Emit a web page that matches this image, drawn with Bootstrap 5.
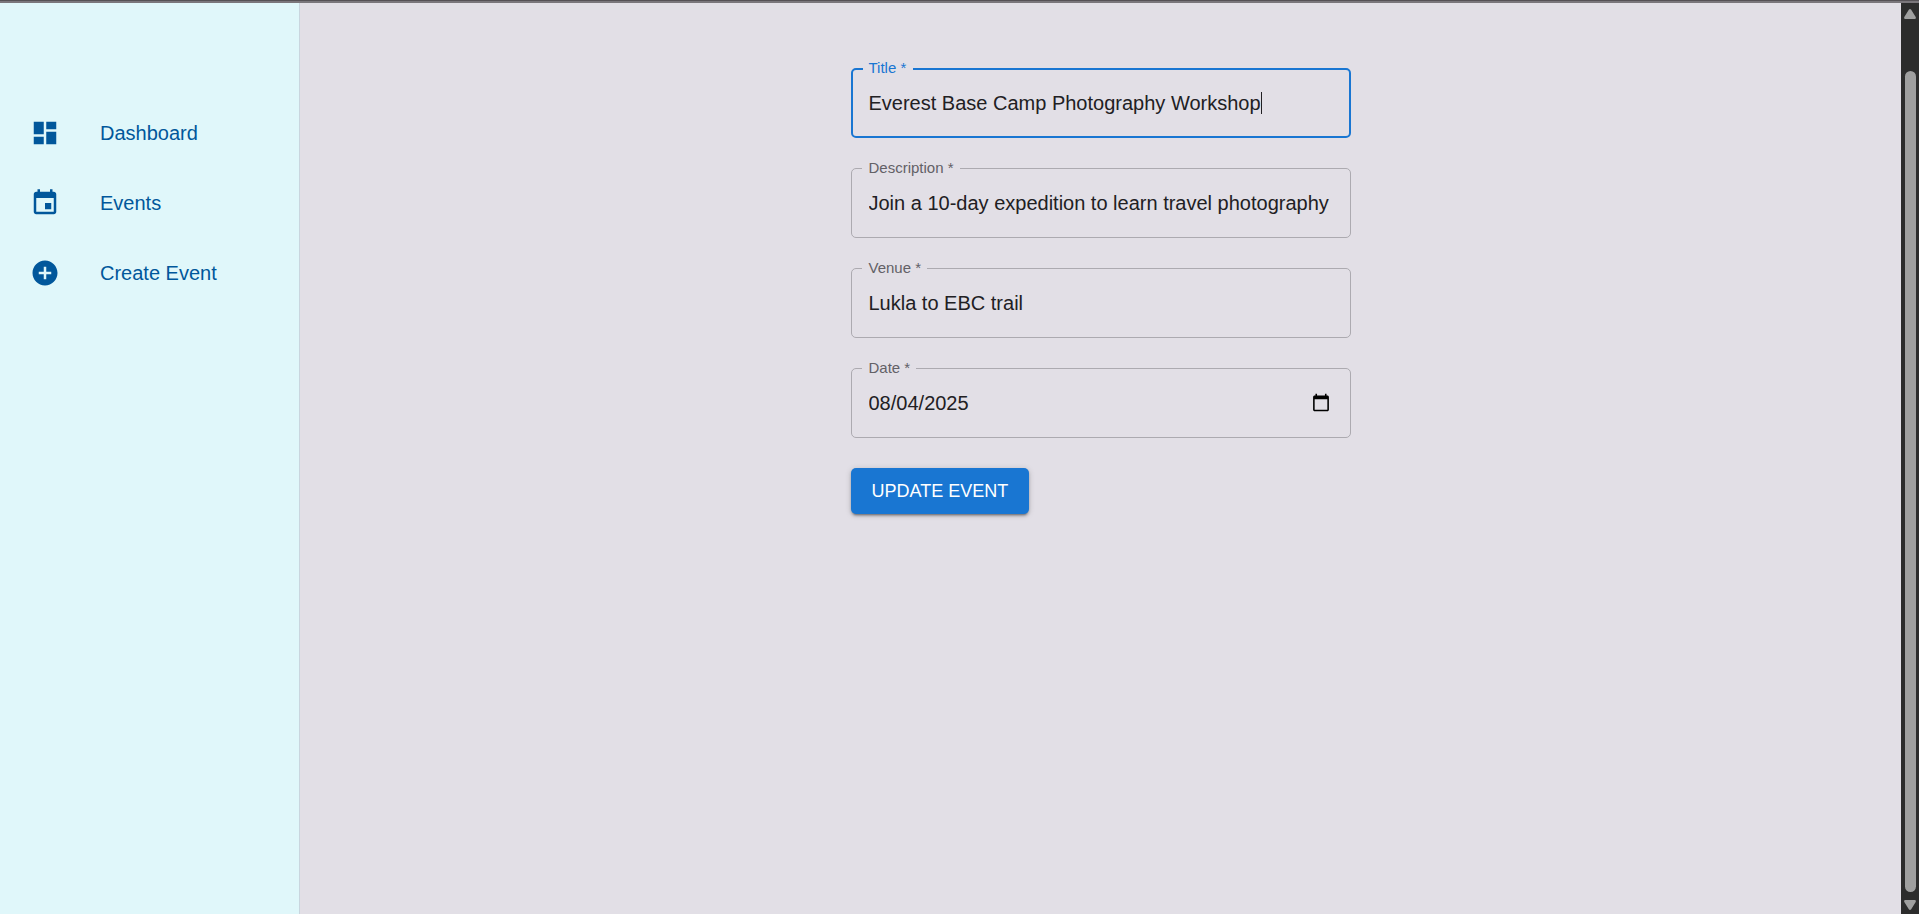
<!DOCTYPE html>
<html lang="en">
<head>
<meta charset="utf-8">
<meta name="viewport" content="width=device-width, initial-scale=1">
<title>Update Event</title>
<link href="https://cdn.jsdelivr.net/npm/bootstrap@5.3.0/dist/css/bootstrap.min.css" rel="stylesheet">
<style>
  :root { --page: #e2dfe6; --brand: #1976d2; --navy: #01579b; }
  body { font-family: "Liberation Sans", Arial, sans-serif; font-size: 20px; line-height: 30px; background: var(--page); }
  .top-edge { height: 3px; background: #7a767b; border-top: 1px solid #555155; }
  .sidebar { width: 300px; background: #e0f7fa; border-right: 1px solid #c9d5de; padding-top: 95px; }
  .sidebar .nav-link { color: var(--navy); gap: 40px; padding: 20px 30px; }
  .sidebar svg { width: 30px; height: 30px; fill: currentColor; flex: none; }
  .event-form { width: 100%; max-width: 500px; padding-top: 65px; }
  .field { margin-bottom: 30px; }
  .field .form-control { height: 70px; padding: 0 17px; font-size: 20px; color: #212023; background: transparent; border: 1px solid #acaab0; border-radius: 5px; box-shadow: none; }
  .field label { top: -10px; left: 11px; padding: 0 6px 0 7px; font-size: 15px; line-height: 20px; color: #636166; background: var(--page); }
  .field.active .form-control { border: 2px solid var(--brand); padding: 0 16px; }
  .field.active label { color: var(--brand); left: 12px; padding: 0 7px 0 6px; }
  .text-caret { left: 410px; top: 24px; width: 1px; height: 22px; background: #212023; }
  .btn-update { font-size: 18px; line-height: 26px; padding: 10px 21px; color: #fff; background: var(--brand); border: 0; border-radius: 5px; box-shadow: 0 3px 2px -2px rgba(0,0,0,.3), 0 2px 3px rgba(0,0,0,.2), 0 1px 6px rgba(0,0,0,.16); }
  .btn-update:hover { color: #fff; background: #1565c0; }
  .scroll-track { width: 18px; background: #2c2c2c; padding: 6px 0 4px; }
  .scroll-track svg { width: 12px; height: 10px; fill: #9f9f9f; }
  .scroll-thumb { width: 11px; margin: 52px 0 8px; border-radius: 6px; background: #9f9f9f; }
</style>
</head>
<body>
<div class="d-flex flex-column min-vh-100">
  <div class="top-edge"></div>
  <div class="d-flex flex-grow-1">
    <nav class="sidebar flex-shrink-0">
      <ul class="nav flex-column">
        <li class="nav-item"><a class="nav-link d-flex align-items-center" href="#">
          <svg viewBox="0 0 24 24" aria-hidden="true"><path d="M3 13h8V3H3v10zm0 8h8v-6H3v6zm10 0h8V11h-8v10zm0-18v6h8V3h-8z"/></svg>Dashboard</a></li>
        <li class="nav-item"><a class="nav-link d-flex align-items-center" href="#">
          <svg viewBox="0 0 24 24" aria-hidden="true"><path d="M17 12h-5v5h5v-5zM16 1v2H8V1H6v2H5c-1.11 0-1.99.9-1.99 2L3 19c0 1.1.89 2 2 2h14c1.1 0 2-.9 2-2V5c0-1.1-.9-2-2-2h-1V1h-2zm3 18H5V8h14v11z"/></svg>Events</a></li>
        <li class="nav-item"><a class="nav-link d-flex align-items-center" href="#">
          <svg viewBox="0 0 24 24" aria-hidden="true"><path d="M12 2C6.48 2 2 6.48 2 12s4.48 10 10 10 10-4.48 10-10S17.52 2 12 2zm5 11h-4v4h-2v-4H7v-2h4V7h2v4h4v2z"/></svg>Create Event</a></li>
      </ul>
    </nav>
    <main class="flex-grow-1 d-flex justify-content-center">
      <form class="event-form">
        <div class="field active position-relative">
          <input class="form-control" id="title" type="text" value="Everest Base Camp Photography Workshop" required>
          <label class="position-absolute" for="title">Title *</label>
          <span class="text-caret position-absolute" aria-hidden="true"></span>
        </div>
        <div class="field position-relative">
          <input class="form-control" id="description" type="text" value="Join a 10-day expedition to learn travel photography" required>
          <label class="position-absolute" for="description">Description *</label>
        </div>
        <div class="field position-relative">
          <input class="form-control" id="venue" type="text" value="Lukla to EBC trail" required>
          <label class="position-absolute" for="venue">Venue *</label>
        </div>
        <div class="field position-relative">
          <input class="form-control" id="date" type="date" value="2025-08-04" required>
          <label class="position-absolute" for="date">Date *</label>
        </div>
        <button class="btn btn-update" type="submit">UPDATE EVENT</button>
      </form>
    </main>
    <div class="scroll-track d-flex flex-column align-items-center flex-shrink-0" aria-hidden="true">
      <svg viewBox="0 0 12 10"><path d="M6 0q.7 0 1.2.8l4.5 7.2q.6 2-1 2H1.300q-1.600 0-1-2L4.800.8Q5.300 0 6 0z"/></svg>
      <div class="scroll-thumb flex-grow-1"></div>
      <svg viewBox="0 0 12 10"><path d="M6 10q.7 0 1.200-.8L11.700 2q.6-2-1-2H1.300Q-.3 0 .3 2l4.500 7.200Q5.300 10 6 10z"/></svg>
    </div>
  </div>
</div>
<script src="https://cdn.jsdelivr.net/npm/bootstrap@5.3.0/dist/js/bootstrap.bundle.min.js"></script>
</body>
</html>
